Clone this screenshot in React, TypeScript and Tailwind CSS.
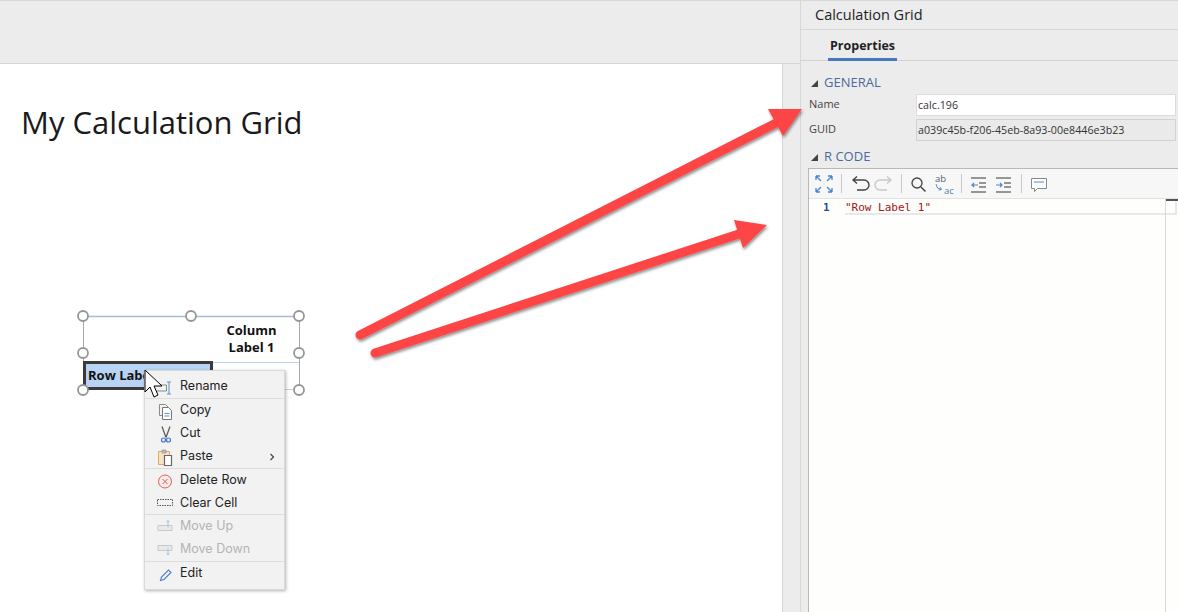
import React from 'react';

const sans = { fontFamily: '"Open Sans", sans-serif' };

const Handle: React.FC<{ x: number; y: number }> = ({ x, y }) => (
  <circle cx={x} cy={y} r="5" fill="#fff" stroke="#969696" strokeWidth="1.8" />
);

const MenuItem: React.FC<{ label: string; disabled?: boolean; arrow?: boolean; divider?: boolean; tall?: boolean; children: React.ReactNode }> = ({ label, disabled, arrow, divider, tall, children }) => (
  <div className={`flex items-center pl-[3px] pr-[9px] ${tall ? 'h-[24px]' : 'h-[23px]'} ${divider ? 'border-b border-[#dcdcdc]' : ''}`}>
    <svg width="28" height="20" viewBox="0 0 28 20" className="shrink-0 ml-[1px]">{children}</svg>
    <span className={`ml-[3px] text-[12.5px] flex-1 ${disabled ? 'text-[#b4b4b4]' : 'text-[#222]'}`} style={{ fontFamily: 'Inter, sans-serif' }}>{label}</span>
    {arrow && (
      <svg width="6" height="8" viewBox="0 0 6 8"><path d="M1.5 1l3 3-3 3" fill="none" stroke="#444" strokeWidth="1.2" /></svg>
    )}
  </div>
);

const ContextMenu: React.FC = () => (
  <div className="absolute left-[144px] top-[370px] w-[141px] h-[220px] bg-[#f2f2f2] border border-[#dadada] shadow-[1px_1px_3px_rgba(0,0,0,0.3)] pt-[4px]">
    <MenuItem label="Rename" divider tall>
      <path d="M5.5 8h12v6h-12" fill="none" stroke="#888" strokeWidth="1" />
      <path d="M20 5v12M18 5h4M18 17h4" fill="none" stroke="#5b8fd0" strokeWidth="1" />
    </MenuItem>
    <MenuItem label="Copy">
      <path d="M10.5 3.5h6l3 3v4M10.5 3.5v11h3" fill="none" stroke="#8a8a8a" strokeWidth="1" />
      <path d="M13.5 6.5h6l3 3v9h-9z" fill="#fff" stroke="#777" strokeWidth="1" />
      <path d="M15.5 12.5h5M15.5 15h5" stroke="#5b8fd0" strokeWidth="1" />
    </MenuItem>
    <MenuItem label="Cut">
      <path d="M13 2.5l4 11M21 2.5l-4 11" fill="none" stroke="#555" strokeWidth="1.2" />
      <circle cx="14.5" cy="16" r="2" fill="none" stroke="#3f78c4" strokeWidth="1.2" />
      <circle cx="19.5" cy="16" r="2" fill="none" stroke="#3f78c4" strokeWidth="1.2" />
    </MenuItem>
    <MenuItem label="Paste" arrow divider tall>
      <path d="M9.5 4.5h11v13h-11z" fill="#f6e3c6" stroke="#e0a85e" strokeWidth="1" />
      <path d="M13 3h4v3h-4z" fill="#bbb" stroke="#999" strokeWidth="0.8" />
      <path d="M15.5 8.5h7v10h-7z" fill="#fff" stroke="#666" strokeWidth="1.2" />
    </MenuItem>
    <MenuItem label="Delete Row">
      <circle cx="16" cy="10.5" r="6.5" fill="#fbeaea" stroke="#d9605c" strokeWidth="1" />
      <path d="M13.5 8l5 5M18.5 8l-5 5" stroke="#d9605c" strokeWidth="1" />
    </MenuItem>
    <MenuItem label="Clear Cell" divider>
      <rect x="8.5" y="6.5" width="15" height="6" fill="none" stroke="#555" strokeWidth="1" strokeDasharray="1.5 1" />
    </MenuItem>
    <MenuItem label="Move Up" disabled>
      <path d="M9 8.5h14v5h-14z" fill="#e9e9e9" stroke="#c9c9c9" strokeWidth="1" />
      <path d="M19 3.5v7M17.5 5l1.5-1.5L20.5 5" fill="none" stroke="#a9c3e3" strokeWidth="1" />
    </MenuItem>
    <MenuItem label="Move Down" disabled divider tall>
      <path d="M9 5.5h14v5h-14z" fill="#e9e9e9" stroke="#c9c9c9" strokeWidth="1" />
      <path d="M19 8v7M17.5 13.5l1.5 1.5 1.5-1.5" fill="none" stroke="#a9c3e3" strokeWidth="1" />
    </MenuItem>
    <MenuItem label="Edit">
      <path d="M11.5 16.5l1-3.5 7-7 2.5 2.5-7 7z" fill="none" stroke="#4a7fc4" strokeWidth="1.1" />
    </MenuItem>
  </div>
);

const CalcGrid: React.FC = () => (
  <>
    <svg className="absolute left-0 top-0 pointer-events-none" width="400" height="420">
      <rect x="83.5" y="316.5" width="216" height="73" fill="#fff" stroke="#a9a9a9" strokeWidth="1" />
      <path d="M83 316.5h216" stroke="#a9bcd8" strokeWidth="1.5" />
      <path d="M212 362.5h87M212 389.5h87" stroke="#bcd2ee" strokeWidth="1" />
    </svg>
    <div className="absolute left-[205px] top-[322px] w-[93px] text-center text-[13px] leading-[17px] font-bold text-[#111]" style={sans}>
      Column<br />Label 1
    </div>
    <div className="absolute left-[83px] top-[361px] w-[130px] h-[29px] bg-[#b8d3f3] border-[3px] border-[#3a3a3a] pl-[2px] text-[13px] leading-[22px] font-bold text-[#111]" style={sans}>
      Row Label 1
    </div>
    <svg className="absolute left-0 top-0 pointer-events-none" width="400" height="420">
      <Handle x={83} y={316} />
      <Handle x={191} y={316} />
      <Handle x={299} y={316} />
      <Handle x={83} y={353} />
      <Handle x={299} y={353} />
      <Handle x={83} y={390} />
      <Handle x={299} y={390} />
    </svg>
  </>
);

const Arrows: React.FC = () => (
  <svg className="absolute left-0 top-0 pointer-events-none" width="1178" height="612">
    <defs>
      <filter id="sh" x="-10%" y="-10%" width="120%" height="130%">
        <feDropShadow dx="1" dy="2" stdDeviation="1.5" floodColor="#000" floodOpacity="0.45" />
      </filter>
    </defs>
    <g filter="url(#sh)" fill="#fe4444" stroke="#fe4444">
      <path d="M360 335L782 120" strokeWidth="9" strokeLinecap="round" fill="none" />
      <path d="M768 109H802L783 136Z" strokeWidth="0" />
      <path d="M375 353L748 231" strokeWidth="9" strokeLinecap="round" fill="none" />
      <path d="M734 220L767 225L743 248Z" strokeWidth="0" />
    </g>
  </svg>
);

const Cursor: React.FC = () => (
  <svg className="absolute left-[144px] top-[369px] pointer-events-none" width="22" height="32" viewBox="0 0 22 32">
    <path d="M1 1v22l5-5 4 10 4-2-4-9h8z" fill="#fff" stroke="#000" strokeWidth="1" />
  </svg>
);

const Toolbar: React.FC = () => (
  <div className="flex items-center h-[30px] bg-[#f7f7f7] border-b border-[#e2e2e2]">
    <svg width="370" height="29" viewBox="0 0 370 29">
      <g fill="none" stroke="#4a86c8" strokeWidth="1.3">
        <path d="M7 7l5 5M7 7h4M7 7v4M23 7l-5 5M23 7h-4M23 7v4M7 23l5-5M7 23h4M7 23v-4M23 23l-5-5M23 23h-4M23 23v-4" />
      </g>
      <g stroke="#c9c9c9"><path d="M32.5 5v19M92.5 5v19M152.5 5v19M212.5 5v19" /></g>
      <path d="M45 11h10a4.5 4.5 0 0 1 0 10h-7M48 7.5l-4 3.5 4 3.5" fill="none" stroke="#444" strokeWidth="1.4" />
      <path d="M81 11H71a4.5 4.5 0 0 0 0 10h7M78 7.5l4 3.5-4 3.5" fill="none" stroke="#c8c8c8" strokeWidth="1.4" />
      <circle cx="108" cy="14" r="5" fill="none" stroke="#444" strokeWidth="1.3" />
      <path d="M112 18l4.5 4.5" stroke="#444" strokeWidth="1.5" />
      <text x="126" y="13" fontSize="9.5" fill="#56606e" fontFamily="Open Sans, sans-serif">ab</text>
      <text x="135" y="24.5" fontSize="9.5" fill="#5a7ea8" fontFamily="Open Sans, sans-serif">ac</text>
      <path d="M127 15l1.5 4 3.5 1.5M129.5 21l3-.5-1.5-2.5" fill="none" stroke="#4a86c8" strokeWidth="0.9" />
      <g stroke="#777" strokeWidth="1.4">
        <path d="M162 9h15M170 14h7M170 18h7M162 23h15" />
        <path d="M187 9h15M195 14h7M195 18h7M187 23h15" />
      </g>
      <path d="M169 16h-6m2-2l-2 2 2 2" fill="none" stroke="#4a86c8" strokeWidth="1.2" />
      <path d="M187 16h6m-2-2l2 2-2 2" fill="none" stroke="#4a86c8" strokeWidth="1.2" />
      <path d="M222.5 9.5h15v10h-9l-3 3v-3h-3z" fill="#fff" stroke="#888" strokeWidth="1" />
      <path d="M225 13h10" stroke="#a9c3e3" strokeWidth="2" />
    </svg>
  </div>
);

const SectionHead: React.FC<{ title: string }> = ({ title }) => (
  <div className="flex items-center h-[20px] pl-[10px]">
    <svg width="7" height="7" viewBox="0 0 7 7"><path d="M7 0v7H0z" fill="#444" /></svg>
    <span className="ml-[6px] text-[13px] text-[#4d6a9c]" style={sans}>{title}</span>
  </div>
);

const Row: React.FC<{ label: string; value: string; readOnly?: boolean }> = ({ label, value, readOnly }) => (
  <div className="flex items-center h-[25px]">
    <span className="w-[115px] pl-[8px] text-[11px] text-[#444]" style={sans}>{label}</span>
    <div className={`w-[260px] h-[22px] border px-[1px] text-[10.7px] leading-[20px] text-[#333] ${readOnly ? 'bg-[#eaeaea] border-[#d2d2d2]' : 'bg-white border-[#dcdcdc]'}`} style={sans}>{value}</div>
  </div>
);

const App: React.FC = () => {
  return (
    <div className="relative flex w-[1178px] h-[612px] overflow-hidden bg-[#ececec]">
      <div className="flex flex-col w-[801px] shrink-0 border-t border-r border-[#d8d8d8]">
        <div className="h-[63px] border-b border-[#d6d6d6]" />
        <div className="flex-1 w-[783px] bg-white border-r border-[#d6d6d6]">
          <h1 className="pl-[21px] pt-[36px] text-[31px] leading-[44px] text-[#1a1a1a]" style={sans}>My Calculation Grid</h1>
        </div>
      </div>

      <div className="flex flex-col flex-1 border-t border-[#d8d8d8]">
        <div className="h-[29px] flex items-center pl-[14px] border-b border-[#d8d8d8] text-[14.5px] text-[#222]" style={sans}>Calculation Grid</div>
        <div className="h-[31px] pl-[27px] border-b border-[#d2d2d2]">
          <div className="inline-block h-[31px] px-[2px] border-b-[3px] border-[#4479bd] text-[12.5px] leading-[32px] font-bold text-[#222]" style={sans}>Properties</div>
        </div>
        <div className="pt-[12px]">
          <SectionHead title="GENERAL" />
        </div>
        <div className="-mt-[1px]">
          <Row label="Name" value="calc.196" />
          <Row label="GUID" value="a039c45b-f206-45eb-8a93-00e8446e3b23" readOnly />
        </div>
        <div className="pt-[5px]">
          <SectionHead title="R CODE" />
        </div>
        <div className="relative ml-[7px] mt-[1px] mr-[2px] flex-1 border border-b-0 border-[#b8b8b8] bg-[#fefefc]">
          <Toolbar />
          <div className="flex h-[16px] text-[11px] leading-[17px]" style={{ fontFamily: '"DejaVu Sans Mono", monospace' }}>
            <div className="w-[36px] pl-[14px] font-bold text-[#1f4f8f]">1</div>
            <div className="flex-1 border-b-2 border-r-2 border-[#e8e8e8] h-[16px] text-[#a31515] mr-[2px]">"Row Label 1"</div>
          </div>
          <div className="absolute right-0 top-[30px] bottom-0 w-[14px] border-l border-[#d8d8d8]">
            <div className="h-[2px] bg-[#555]" />
          </div>
        </div>
      </div>

      <CalcGrid />
      <ContextMenu />
      <Cursor />
      <Arrows />
    </div>
  );
};

export default App;
